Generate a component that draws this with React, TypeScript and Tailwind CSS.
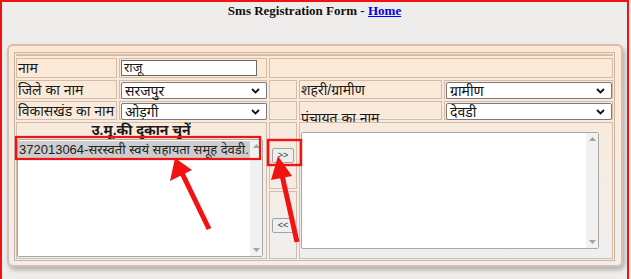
import React from "react";

const F = "font-['Liberation_Sans','Noto_Sans_Devanagari','Lohit_Devanagari','FreeSans','Noto_Sans',sans-serif]";
const cell = "border border-[#d4bcaa]";

function Chevron() {
  return (
    <svg width="9" height="6" viewBox="0 0 9 6" className="shrink-0">
      <path d="M1 1 L4.5 4.5 L8 1" fill="none" stroke="#111" strokeWidth="1.8" />
    </svg>
  );
}

function Select({ value, w }: { value: string; w: string }) {
  return (
    <div className={`${w} h-[17px] bg-white border border-[#7a7a7a] rounded-[2px] flex items-center justify-between pl-[3px] pr-[6px] text-[14px] leading-[15px] text-[#111] ${F}`}>
      <span className="pt-[1px]">{value}</span>
      <Chevron />
    </div>
  );
}

function Scrollbar() {
  return (
    <div className="w-[12px] h-full bg-[#f1f1f1] flex flex-col items-center justify-between py-[4px] shrink-0">
      <svg width="7" height="4" viewBox="0 0 7 4"><path d="M0 4 L3.5 0 L7 4 Z" fill="#a3a3a3" /></svg>
      <svg width="7" height="4" viewBox="0 0 7 4"><path d="M0 0 L3.5 4 L7 0 Z" fill="#a3a3a3" /></svg>
    </div>
  );
}

function Btn({ label }: { label: string }) {
  return (
    <div className={`w-[22px] h-[15px] bg-[#efefef] border border-[#a3a3a3] rounded-[2px] flex items-center justify-center text-[9px] leading-none text-[#333] ${F}`}>
      {label}
    </div>
  );
}

export default function App() {
  return (
    <div className="relative w-[631px] h-[279px] overflow-hidden bg-[#efedeb]">
      <div className="w-[629px] text-center pt-[3px] font-['Liberation_Serif',serif] font-bold text-[13px] leading-[15px] text-[#111]">
        Sms Registration Form - <span className="text-[#0000ee] underline">Home</span>
      </div>

      <div className="ml-[7px] mt-[26px] w-[616px] h-[223px] rounded-[6px] border-2 border-[#dbbcb0] bg-gradient-to-b from-[#fde8d3] to-[#efefef] shadow-[2px_3px_4px_rgba(0,0,0,0.25)] pl-[5px] pt-[6px]">
        <div className="w-[601px] border border-[#cdb2a0] p-[1px]">
          <div className="grid grid-cols-[101px_148px_28px_143px_169px] grid-rows-[2px_20px_19px_19px_67px_68px] gap-[2px] text-[14px] text-[#1a1a1a]">
            <div className={`col-span-5 ${cell}`} />

            <div className={`${cell} pl-[1px] leading-[18px] ${F}`}>नाम</div>
            <div className={`${cell} pl-[1px] pt-[1px]`}>
              <div className={`w-[136px] h-[16px] bg-white border border-[#6a6a6a] pl-[2px] text-[13px] leading-[14px] ${F}`}>राजू</div>
            </div>
            <div className={`col-span-3 ${cell}`} />

            <div className={`${cell} pl-[1px] leading-[18px] ${F}`}>जिले का नाम</div>
            <div className={`${cell} pl-[1px] pt-[1px]`}>
              <Select value="सरजपुर" w="w-[146px]" />
            </div>
            <div className={cell} />
            <div className={`${cell} pl-[1px] leading-[18px] ${F}`}>शहरी/ग्रामीण</div>
            <div className={`${cell} pl-[1px] pt-[1px]`}>
              <Select value="ग्रामीण" w="w-[166px]" />
            </div>

            <div className={`${cell} pl-[1px] leading-[18px] ${F}`}>विकासखंड का नाम</div>
            <div className={`${cell} pl-[1px] pt-[1px]`}>
              <Select value="ओड़गी" w="w-[146px]" />
            </div>
            <div className={cell} />
            <div className={`${cell} pl-[1px] pt-[7px] leading-[18px] whitespace-nowrap ${F}`}>पंचायत का नाम</div>
            <div className={`${cell} pl-[1px] pt-[1px]`}>
              <Select value="देवडी" w="w-[166px]" />
            </div>

            <div className={`col-span-2 row-span-2 ${cell} flex flex-col`}>
              <div className={`h-[15px] w-[248px] text-center font-bold leading-[15px] ${F}`}>उ.मू.की दुकान चुनें</div>
              <div className="mt-[1px] w-[246px] h-[118px] bg-white border border-[#a9a9a9] rounded-[2px] flex overflow-hidden">
                <div className="flex-1 pt-[1px] min-w-0">
                  <div className={`h-[17px] bg-[#cdcdcd] pl-[1px] text-[13px] leading-[17px] text-[#222] whitespace-nowrap ${F}`}>
                    372013064-सरस्वती स्वयं सहायता समूह देवडी.
                  </div>
                </div>
                <Scrollbar />
              </div>
            </div>
            <div className={`${cell} flex items-center justify-center`}>
              <Btn label=">>" />
            </div>
            <div className={`col-span-2 row-span-2 ${cell} pl-[1px] pt-[9px]`}>
              <div className="w-[298px] h-[117px] bg-white border border-[#a9a9a9] rounded-[2px] flex overflow-hidden">
                <div className="flex-1" />
                <Scrollbar />
              </div>
            </div>
            <div className={`col-start-3 row-start-6 ${cell} flex items-center justify-center`}>
              <Btn label="<<" />
            </div>
          </div>
        </div>
      </div>

      <svg className="absolute left-0 top-0 pointer-events-none" width="631" height="279" viewBox="0 0 631 279">
        <rect x="1" y="1" width="627" height="300" fill="none" stroke="#f21212" strokeWidth="2" />
        <rect x="16" y="137" width="244" height="22" fill="none" stroke="#f21212" strokeWidth="2.2" />
        <rect x="268" y="140" width="33" height="25" fill="none" stroke="#f21212" strokeWidth="2.4" />
        <line x1="209" y1="229" x2="181" y2="171" stroke="#f21212" strokeWidth="5" />
        <polygon points="175,158 170,181 192,170" fill="#f21212" />
        <line x1="297" y1="242" x2="282" y2="175" stroke="#f21212" strokeWidth="5" />
        <polygon points="278,156 271,180 292,176" fill="#f21212" />
      </svg>
    </div>
  );
}
